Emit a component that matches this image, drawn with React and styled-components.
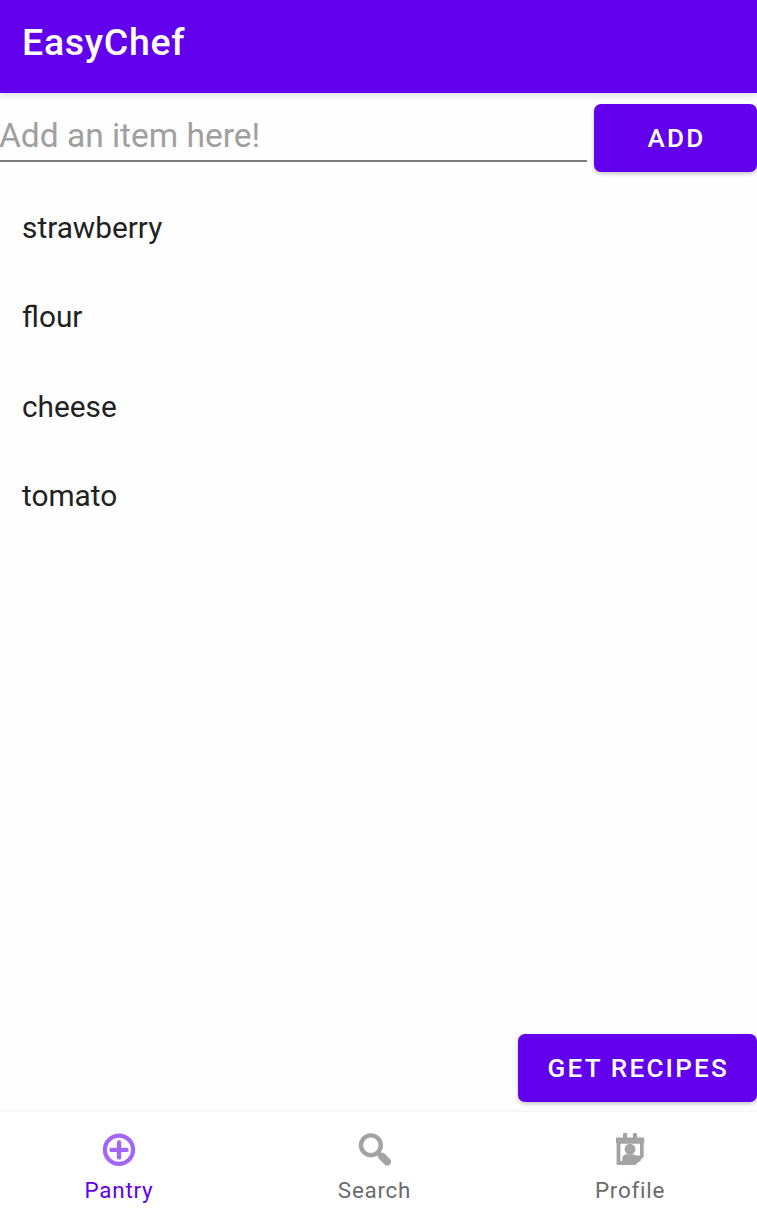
import React from "react";
import styled, { createGlobalStyle } from "styled-components";

const GlobalStyle = createGlobalStyle`
  * { box-sizing: border-box; }
  body { margin: 0; background: #fff; font-family: Roboto, sans-serif; }
`;

const Screen = styled.div`
  height: 1210px;
  width: 757px;
  display: flex;
  flex-direction: column;
  overflow: hidden;
  background: #fefefe;
`;

const AppBar = styled.header`
  flex: none;
  height: 93px;
  padding: 20px 22px 0;
  background: #6200ee;
  box-shadow: 0 2px 8px rgba(0, 0, 0, 0.15);
`;

const Title = styled.h1`
  margin: 0;
  color: #fff;
  font-size: 37.5px;
  line-height: 44px;
  font-weight: 500;
  letter-spacing: 0.7px;
`;

const AddRow = styled.form`
  flex: none;
  display: flex;
  gap: 7px;
  height: 89.7px;
  padding-top: 10.7px;
`;

const ItemInput = styled.input`
  width: 587px;
  height: 58px;
  padding: 7px 0 0;
  border: 0;
  border-bottom: 2px solid #7d7d7d;
  outline: 0;
  background: transparent;
  color: #222;
  font: 400 33.6px Roboto, sans-serif;
  letter-spacing: -0.04px;
  text-indent: -1px;
  &::placeholder { color: #a0a0a0; opacity: 1; }
`;

const Button = styled.button`
  flex: none;
  width: ${(p) => p.$width}px;
  height: 68px;
  padding: 0 0 0 2px;
  border: 0;
  border-radius: 7px;
  background: #6200ee;
  color: #fff;
  font: 500 26.1px Roboto, sans-serif;
  letter-spacing: 2.18px;
  box-shadow: 0 2px 4px rgba(0, 0, 0, 0.22);
`;

const ItemList = styled.ul`
  flex: 1;
  margin: 0;
  padding: 0;
  list-style: none;
`;

const Item = styled.li`
  height: 89.5px;
  padding-left: 22px;
  display: flex;
  align-items: center;
  color: #222;
  font-size: 29.8px;
`;

const Actions = styled.div`
  flex: none;
  display: flex;
  justify-content: flex-end;
  padding-bottom: 10.3px;
`;

const BottomNav = styled.nav`
  flex: none;
  height: 98px;
  display: flex;
  justify-content: center;
  padding-right: 8px;
  background: #fff;
  box-shadow: 0 -1px 3px rgba(0, 0, 0, 0.06);
`;

const Tab = styled.a`
  width: 255.5px;
  flex: none;
  display: flex;
  flex-direction: column;
  align-items: center;
  padding-top: 18px;
  color: ${(p) => (p.$active ? "#6200ee" : "#6b6b6b")};
  font-size: 22.4px;
  line-height: 26px;
  letter-spacing: 0.75px;
  svg { display: block; margin-bottom: 7px; color: ${(p) => (p.$active ? "#a366f5" : "#a3a3a3")}; }
`;

const PantryIcon = () => (
  <svg width="40" height="40" viewBox="0 0 40 40" fill="none" stroke="currentColor">
    <circle cx="20" cy="19.8" r="14.1" strokeWidth="4.2" />
    <path d="M20 12.4v15M12.5 19.9h15" strokeWidth="4.4" strokeLinecap="round" />
  </svg>
);

const SearchIcon = () => (
  <svg width="40" height="40" viewBox="0 0 40 40" fill="none" stroke="currentColor">
    <circle cx="15.9" cy="15.3" r="9.9" strokeWidth="4.4" />
    <path d="M22.5 22.3l5 5" strokeWidth="5.4" />
    <path d="M27.2 26.8l5 5" strokeWidth="7.6" strokeLinecap="round" />
  </svg>
);

const ProfileIcon = () => (
  <svg width="40" height="40" viewBox="0 0 40 40" fill="currentColor">
    <path
      fillRule="evenodd"
      d="M6 8.4q0-1 1-1h6V4.2Q13 3 14.2 3h1.8q1.2 0 1.2 1.2v3.2h5.6V4.2Q22.8 3 24 3h1.8Q27 3 27 4.2v3.2h6.3q1 0 1 1v4.4l-.6.8v13.2l-8.3 8.2H7.8q-1.2 0-1.2-1.2V13.6l-.6-.8zM10.4 13.8V31H30V13.8z"
    />
    <circle cx="20" cy="19.2" r="5.4" />
    <path d="M12.3 31.5v-2.4q0-4.8 5-4.8h5.4q1.8 0 3 1.2H30.5v6z" />
  </svg>
);

const items = ["strawberry", "flour", "cheese", "tomato"];
const tabs = [
  { label: "Pantry", Icon: PantryIcon, active: true },
  { label: "Search", Icon: SearchIcon },
  { label: "Profile", Icon: ProfileIcon },
];

export default function App() {
  return (
    <Screen>
      <GlobalStyle />
      <AppBar><Title>EasyChef</Title></AppBar>
      <AddRow>
        <ItemInput placeholder="Add an item here!" />
        <Button type="button" $width={163}>ADD</Button>
      </AddRow>
      <ItemList>
        {items.map((item) => <Item key={item}>{item}</Item>)}
      </ItemList>
      <Actions><Button type="button" $width={239.5}>GET RECIPES</Button></Actions>
      <BottomNav>
        {tabs.map(({ label, Icon, active }) => (
          <Tab key={label} $active={active}><Icon />{label}</Tab>
        ))}
      </BottomNav>
    </Screen>
  );
}
